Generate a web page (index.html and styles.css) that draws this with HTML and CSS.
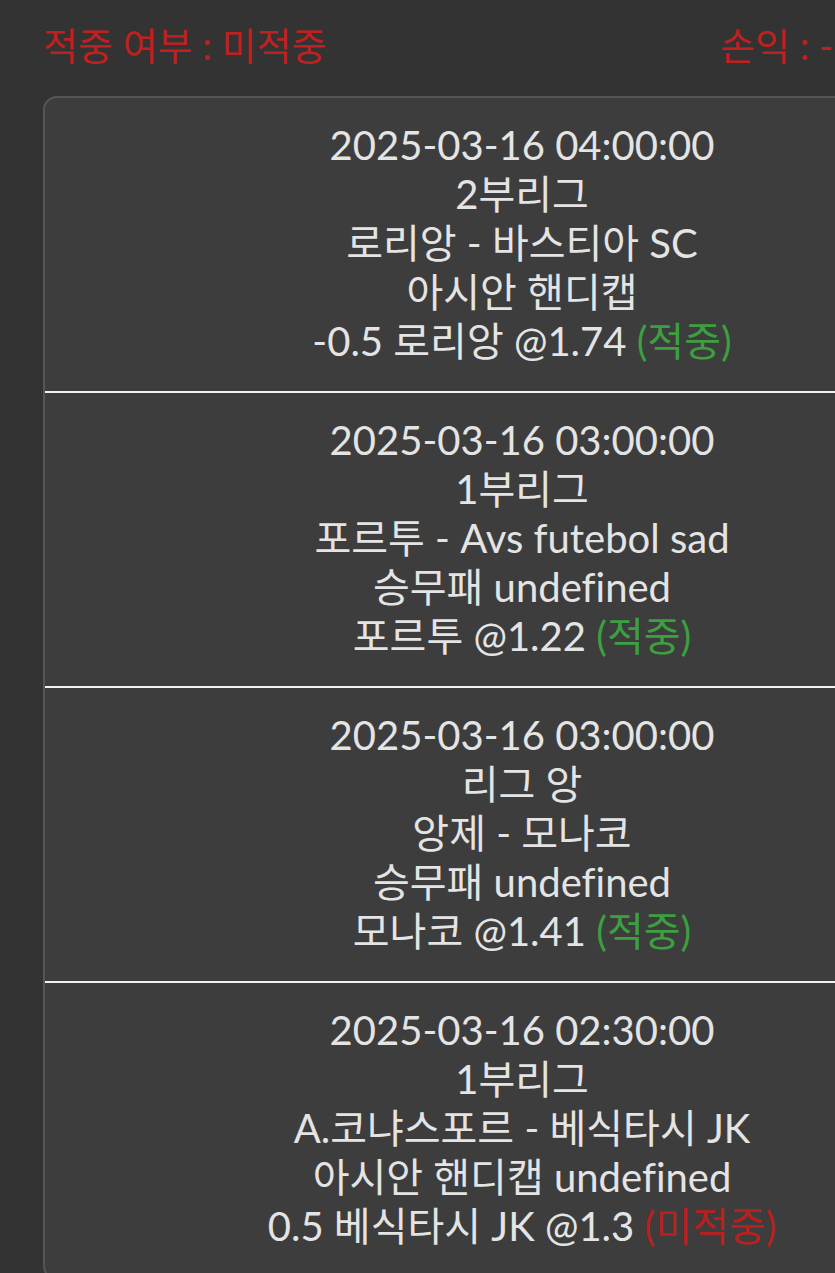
FILE: index.html
```html
<!DOCTYPE html>
<html lang="ko">
<head>
<meta charset="utf-8">
<link rel="stylesheet" href="styles.css">
</head>
<body>
<div class="page">
  <div class="summary">
    <div class="sum-item">적중 여부 : 미적중</div>
    <div class="sum-item">손익 : -</div>
  </div>
  <div class="card">
    <div class="bet">
      <div>2025-03-16 04:00:00</div>
      <div>2부리그</div>
      <div>로리앙 - 바스티아 SC</div>
      <div>아시안 핸디캡</div>
      <div>-0.5 로리앙 @1.74 <span class="hit">(적중)</span></div>
    </div>
    <div class="bet">
      <div>2025-03-16 03:00:00</div>
      <div>1부리그</div>
      <div>포르투 - Avs futebol sad</div>
      <div>승무패 undefined</div>
      <div>포르투 @1.22 <span class="hit">(적중)</span></div>
    </div>
    <div class="bet">
      <div>2025-03-16 03:00:00</div>
      <div>리그 앙</div>
      <div>앙제 - 모나코</div>
      <div>승무패 undefined</div>
      <div>모나코 @1.41 <span class="hit">(적중)</span></div>
    </div>
    <div class="bet">
      <div>2025-03-16 02:30:00</div>
      <div>1부리그</div>
      <div>A.코냐스포르 - 베식타시 JK</div>
      <div>아시안 핸디캡 undefined</div>
      <div>0.5 베식타시 JK @1.3 <span class="miss">(미적중)</span></div>
    </div>
  </div>
</div>
</body>
</html>
```

FILE: styles.css
```css
html, body {
  margin: 0;
  padding: 0;
  background: #333333;
  overflow: hidden;
}
body {
  font-family: Lato, "Noto Sans CJK KR", sans-serif;
  font-variant-ligatures: none;
  color: #e4e4e4;
}
.page {
  width: 958px;
  padding: 20px 0 0 43px;
}
.summary {
  display: grid;
  grid-template-columns: 677px auto;
  font-size: 38px;
  line-height: 50px;
  color: #bf2020;
  white-space: nowrap;
  margin-bottom: 26px;
}
.card {
  background: #3d3d3d;
  border: 2px solid #555555;
  border-radius: 14px;
}
.bet {
  padding: 23px 0 25px;
  border-bottom: 2px solid #f2f2f2;
  text-align: center;
  font-size: 40px;
  line-height: 49px;
}
.hit { color: #3c9f40; }
.miss { color: #b8201e; }
```
